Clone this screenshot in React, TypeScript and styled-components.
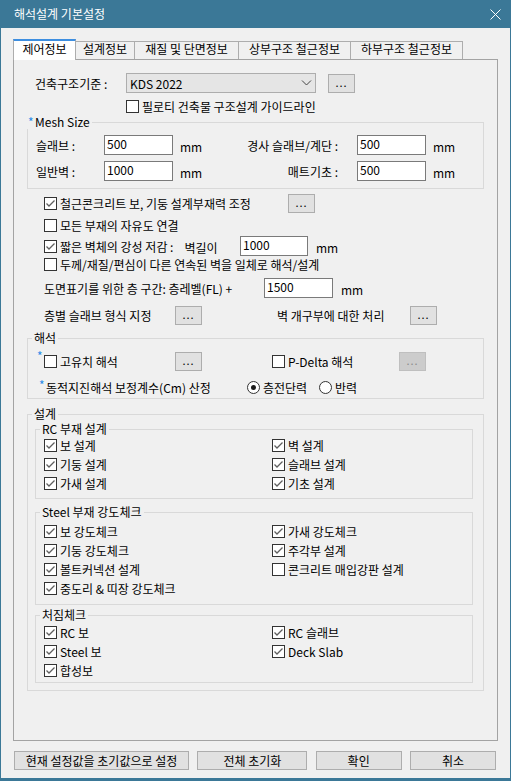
import React from "react";
import styled, { createGlobalStyle } from "styled-components";

const GlobalStyle = createGlobalStyle`
  html, body {
    margin: 0;
    padding: 0;
    background: #f0f0f0;
  }
  body {
    font-family: "Noto Sans CJK KR", "Noto Sans", sans-serif;
    font-size: 12px;
    color: #000;
  }
  * {
    box-sizing: border-box;
  }
`;

const Window = styled.div`
  width: 511px;
  height: 781px;
  border: 1px solid #3b7897;
  border-top: 0;
  border-bottom-width: 3px;
  background: #f0f0f0;
  display: flex;
  flex-direction: column;
`;

const TitleBar = styled.div`
  height: 28px;
  flex: none;
  background: #3b7897;
  color: #fff;
  display: flex;
  align-items: center;
  justify-content: space-between;
  padding: 0 9px 0 13px;
  line-height: 14px;
`;

const Body = styled.div`
  padding: 11px 12px 0;
  display: flex;
  flex-direction: column;
`;

const TabStrip = styled.div`
  display: flex;
  align-items: flex-end;
  height: 20px;
`;

const Tab = styled.div<{ $active?: boolean; $w: number }>`
  position: relative;
  z-index: ${(p) => (p.$active ? 1 : 0)};
  width: ${(p) => p.$w}px;
  height: ${(p) => (p.$active ? 21 : 18)}px;
  margin: 0 -1px ${(p) => (p.$active ? -1 : 0)}px 0;
  padding-top: ${(p) => (p.$active ? 1 : 0)}px;
  border: 1px solid #adadad;
  border-top: ${(p) => (p.$active ? "2px solid #3d8ee0" : "1px solid #adadad")};
  border-bottom: 0;
  background: ${(p) => (p.$active ? "#fff" : "#f0f0f0")};
  text-align: center;
  line-height: 14px;
  white-space: nowrap;
`;

const Panel = styled.div`
  height: 682px;
  border: 1px solid #a3a3a3;
  background: #f0f0f0;
  padding: 0 13px;
  display: flex;
  flex-direction: column;
`;

const StandardGrid = styled.div`
  display: grid;
  grid-template-columns: 91px auto;
  grid-template-rows: 20px 16px;
  row-gap: 5px;
  align-items: center;
  justify-items: start;
  margin: 13px 0 0 8px;
`;

const Inline = styled.div<{ $gap?: number }>`
  display: flex;
  align-items: center;
  gap: ${(p) => p.$gap ?? 0}px;
`;

const Combo = styled.div`
  width: 190px;
  height: 20px;
  border: 1px solid #adadad;
  background: #e5e5e5;
  display: flex;
  align-items: center;
  justify-content: space-between;
  padding: 0 3px 0 3px;
`;

const Group = styled.fieldset<{ $mt?: number }>`
  margin: ${(p) => p.$mt ?? 0}px 0 0;
  padding: 0;
  border: 1px solid #d9d9d9;
  min-width: 0;
`;

const Legend = styled.legend<{ $inset?: number }>`
  margin-left: ${(p) => p.$inset ?? 4}px;
  padding: 0 2px;
  line-height: 14px;
  font-size: 12px;
  white-space: nowrap;
`;

const Star = styled.span<{ $dy?: number }>`
  display: inline-block;
  width: 7px;
  flex: none;
  align-self: flex-start;
  margin-top: ${(p) => p.$dy ?? 0}px;
  color: #2a8be8;
  font-size: 12px;
  line-height: 10px;
`;

const MeshGrid = styled.div`
  display: grid;
  grid-template-columns: 68px 69px 57px 127px 69px auto;
  grid-auto-rows: 20px;
  row-gap: 6px;
  align-items: center;
  padding: 6px 0 7px 8px;
`;

const RightLabel = styled.span`
  text-align: right;
  padding-right: 19px;
  white-space: nowrap;
`;

const Unit = styled.span<{ $ml?: number }>`
  margin-left: ${(p) => p.$ml ?? 7}px;
  padding-top: 2px;
`;

const TextBox = styled.input<{ $w: number }>`
  width: ${(p) => p.$w}px;
  height: 20px;
  border: 1px solid #7a7a7a;
  background: #fff;
  font: inherit;
  font-size: 12px;
  padding: 0 2px 3px;
  color: #000;
  outline: none;
`;

const DotsButton = styled.button<{ $disabled?: boolean }>`
  width: 27px;
  height: 19px;
  flex: none;
  padding: 0 0 3px;
  font: inherit;
  font-size: 11px;
  letter-spacing: 1px;
  line-height: 14px;
  border: 1px solid ${(p) => (p.$disabled ? "#bfbfbf" : "#adadad")};
  background: ${(p) => (p.$disabled ? "#cccccc" : "#e1e1e1")};
  color: ${(p) => (p.$disabled ? "#8a8a8a" : "#000")};
`;

const OptionRow = styled.div<{ $h: number; $mt?: number }>`
  display: flex;
  align-items: center;
  height: ${(p) => p.$h}px;
  margin: ${(p) => p.$mt ?? 0}px 0 0 17px;
  white-space: nowrap;
`;

const Cell = styled.div<{ $w: number }>`
  width: ${(p) => p.$w}px;
  flex: none;
  display: flex;
  align-items: center;
  white-space: nowrap;
`;

const Row = styled.div<{ $h: number; $mt?: number; $pl?: number }>`
  display: flex;
  align-items: center;
  height: ${(p) => p.$h}px;
  margin-top: ${(p) => p.$mt ?? 0}px;
  padding-left: ${(p) => p.$pl ?? 0}px;
  white-space: nowrap;
`;

const GroupBody = styled.div`
  padding: 0 10px 7px 7px;
`;

const CheckGrid = styled.div<{ $pt: number; $pb: number }>`
  display: grid;
  grid-template-columns: 228px auto;
  grid-auto-rows: 19px;
  align-items: center;
  padding: ${(p) => p.$pt}px 0 ${(p) => p.$pb}px 8px;
`;

const CheckLabel = styled.span`
  display: inline-flex;
  align-items: center;
  gap: 3px;
  white-space: nowrap;
`;

const Box = styled.span`
  width: 13px;
  height: 13px;
  flex: none;
  border: 1px solid #333;
  background: #fff;
  display: inline-flex;
  align-items: center;
  justify-content: center;
`;

const RadioDot = styled.span<{ $on?: boolean }>`
  width: 13px;
  height: 13px;
  flex: none;
  border-radius: 50%;
  border: 1px solid #333;
  background: #fff;
  display: inline-flex;
  align-items: center;
  justify-content: center;
  &::after {
    content: "";
    width: 5px;
    height: 5px;
    border-radius: 50%;
    background: ${(p) => (p.$on ? "#1a1a1a" : "transparent")};
  }
`;

const Footer = styled.div`
  display: flex;
  justify-content: space-between;
  margin-top: 10px;
  padding: 0 2px 0 1px;
`;

const DialogButton = styled.button<{ $w: number }>`
  width: ${(p) => p.$w}px;
  height: 19px;
  padding: 0;
  border: 1px solid #adadad;
  background: #e1e1e1;
  font: inherit;
  font-size: 12px;
  line-height: 14px;
  color: #000;
`;

const Check = ({ on, label }: { on?: boolean; label: string }) => (
  <CheckLabel>
    <Box>
      {on && (
        <svg width="11" height="11" viewBox="0 0 11 11">
          <polyline
            points="1.5,5.5 4,8 9.5,2.5"
            fill="none"
            stroke="#5f5f5f"
            strokeWidth="1.3"
          />
        </svg>
      )}
    </Box>
    <span>{label}</span>
  </CheckLabel>
);

const Radio = ({ on, label }: { on?: boolean; label: string }) => (
  <CheckLabel>
    <RadioDot $on={on} />
    <span>{label}</span>
  </CheckLabel>
);

const tabs = [
  { label: "제어정보", w: 63 },
  { label: "설계정보", w: 60 },
  { label: "재질 및 단면정보", w: 105 },
  { label: "상부구조 철근정보", w: 113 },
  { label: "하부구조 철근정보", w: 113 },
];

const rcChecks = [
  { label: "보 설계", on: true },
  { label: "벽 설계", on: true },
  { label: "기둥 설계", on: true },
  { label: "슬래브 설계", on: true },
  { label: "가새 설계", on: true },
  { label: "기초 설계", on: true },
];

const steelChecks = [
  { label: "보 강도체크", on: true },
  { label: "가새 강도체크", on: true },
  { label: "기둥 강도체크", on: true },
  { label: "주각부 설계", on: true },
  { label: "볼트커넥션 설계", on: true },
  { label: "콘크리트 매입강판 설계", on: false },
  { label: "중도리 & 띠장 강도체크", on: true },
];

const deflectionChecks = [
  { label: "RC 보", on: true },
  { label: "RC 슬래브", on: true },
  { label: "Steel 보", on: true },
  { label: "Deck Slab", on: true },
  { label: "합성보", on: true },
];

const App = () => {
  return (
    <>
      <GlobalStyle />
      <Window>
        <TitleBar>
          <span>해석설계 기본설정</span>
          <svg width="11" height="11" viewBox="0 0 11 11">
            <path d="M0.5 0.5 L10.5 10.5 M10.5 0.5 L0.5 10.5" stroke="#fff" strokeWidth="1" />
          </svg>
        </TitleBar>
        <Body>
          <TabStrip>
            {tabs.map((t, i) => (
              <Tab key={t.label} $w={t.w} $active={i === 0}>
                {t.label}
              </Tab>
            ))}
          </TabStrip>
          <Panel>
            <StandardGrid>
              <span>건축구조기준 :</span>
              <Inline $gap={12}>
                <Combo>
                  <span>KDS 2022</span>
                  <svg width="11" height="6" viewBox="0 0 11 6">
                    <path d="M1 0.5 L5.5 5 L10 0.5" fill="none" stroke="#444" strokeWidth="1" />
                  </svg>
                </Combo>
                <DotsButton>...</DotsButton>
              </Inline>
              <span />
              <Check label="필로티 건축물 구조설계 가이드라인" />
            </StandardGrid>

            <Group $mt={1}>
              <Legend $inset={-2}>
                <Star $dy={0}>*</Star>Mesh Size
              </Legend>
              <MeshGrid>
                <span>슬래브 :</span>
                <TextBox $w={69} readOnly value="500" />
                <Unit>mm</Unit>
                <RightLabel>경사 슬래브/계단 :</RightLabel>
                <TextBox $w={69} readOnly value="500" />
                <Unit>mm</Unit>
                <span>일반벽 :</span>
                <TextBox $w={69} readOnly value="1000" />
                <Unit>mm</Unit>
                <RightLabel>매트기초 :</RightLabel>
                <TextBox $w={69} readOnly value="500" />
                <Unit>mm</Unit>
              </MeshGrid>
            </Group>

            <OptionRow $h={21} $mt={4}>
              <Cell $w={244}>
                <Check on label="철근콘크리트 보, 기둥 설계부재력 조정" />
              </Cell>
              <DotsButton>...</DotsButton>
            </OptionRow>
            <OptionRow $h={22}>
              <Check label="모든 부재의 자유도 연결" />
            </OptionRow>
            <OptionRow $h={20}>
              <Cell $w={196}>
                <Check on label="짧은 벽체의 강성 저감 :" />
                <Unit $ml={11}>벽길이</Unit>
              </Cell>
              <TextBox $w={68} readOnly value="1000" />
              <Unit $ml={8}>mm</Unit>
            </OptionRow>
            <OptionRow $h={17}>
              <Check label="두께/재질/편심이 다른 연속된 벽을 일체로 해석/설계" />
            </OptionRow>
            <OptionRow $h={20} $mt={5}>
              <Cell $w={220}>도면표기를 위한 층 구간: 층레벨(FL) +</Cell>
              <TextBox $w={69} readOnly value="1500" />
              <Unit $ml={8}>mm</Unit>
            </OptionRow>
            <OptionRow $h={19} $mt={8}>
              <Cell $w={131}>층별 슬래브 형식 지정</Cell>
              <DotsButton>...</DotsButton>
              <Cell $w={75} />
              <Cell $w={133}>벽 개구부에 대한 처리</Cell>
              <DotsButton>...</DotsButton>
            </OptionRow>

            <Group $mt={6}>
              <Legend>해석</Legend>
              <Row $h={18} $mt={7} $pl={9}>
                <Cell $w={138}>
                  <Star $dy={-2}>*</Star>
                  <Check label="고유치 해석" />
                </Cell>
                <Cell $w={97}>
                  <DotsButton>...</DotsButton>
                </Cell>
                <Cell $w={127}>
                  <Check label="P-Delta 해석" />
                </Cell>
                <DotsButton $disabled>...</DotsButton>
              </Row>
              <Row $h={18} $mt={8} $pl={11}>
                <Cell $w={208}>
                  <Star $dy={1}>*</Star>
                  <span>동적지진해석 보정계수(Cm) 산정</span>
                </Cell>
                <Cell $w={72}>
                  <Radio on label="층전단력" />
                </Cell>
                <Radio label="반력" />
              </Row>
              <Row $h={2} />
            </Group>

            <Group $mt={8}>
              <Legend>설계</Legend>
              <GroupBody>
                <Group $mt={1}>
                  <Legend>RC 부재 설계</Legend>
                  <CheckGrid $pt={0} $pb={5}>
                    {rcChecks.map((c) => (
                      <Check key={c.label} on={c.on} label={c.label} />
                    ))}
                  </CheckGrid>
                </Group>
                <Group $mt={6}>
                  <Legend>Steel 부재 강도체크</Legend>
                  <CheckGrid $pt={3} $pb={6}>
                    {steelChecks.map((c) => (
                      <Check key={c.label} on={c.on} label={c.label} />
                    ))}
                  </CheckGrid>
                </Group>
                <Group $mt={3}>
                  <Legend>처짐체크</Legend>
                  <CheckGrid $pt={1} $pb={2}>
                    {deflectionChecks.map((c) => (
                      <Check key={c.label} on={c.on} label={c.label} />
                    ))}
                  </CheckGrid>
                </Group>
              </GroupBody>
            </Group>
          </Panel>
          <Footer>
            <DialogButton $w={175}>현재 설정값을 초기값으로 설정</DialogButton>
            <DialogButton $w={110}>전체 초기화</DialogButton>
            <DialogButton $w={86}>확인</DialogButton>
            <DialogButton $w={86}>취소</DialogButton>
          </Footer>
        </Body>
      </Window>
    </>
  );
};

export default App;
